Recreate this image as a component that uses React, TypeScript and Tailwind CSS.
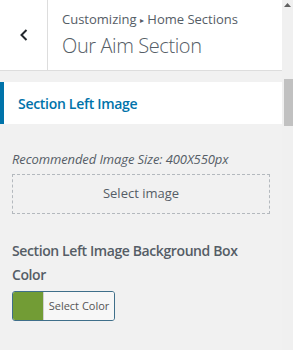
export default function App() {
  return (
    <div className="w-[293px] h-[350px] flex bg-[#f1f1f1] overflow-hidden font-['Segoe_UI','Open_Sans',sans-serif] text-[#555d66]">
      <div className="flex-1 flex flex-col">
        <div className="h-[71px] bg-white border-b border-[#dddddd] flex">
          <button className="w-[48px] border-r border-[#dddddd] flex items-center justify-center">
            <svg width="10" height="14" viewBox="0 0 10 14">
              <path d="M7.5 2 L2.5 7 L7.5 12" stroke="#23282d" strokeWidth="2" fill="none" />
            </svg>
          </button>
          <div className="flex flex-col pl-[14px] pt-[10px]">
            <div className="text-[13px] leading-[18px] text-[#555d66]">
              Customizing <span className="text-[8px] align-[1px]">▸</span> Home Sections
            </div>
            <div className="text-[20px] leading-[28px] font-light tracking-[-0.4px] text-[#555d66] mt-[3px]">Our Aim Section</div>
          </div>
        </div>
        <div className="mt-[11px] h-[42px] bg-white border-l-4 border-[#0073aa] flex items-center pl-[14px]">
          <span className="text-[14px] font-semibold tracking-[-0.3px] text-[#0073aa]">Section Left Image</span>
        </div>
        <div className="px-[12px] pt-[26px]">
          <div className="text-[13px] italic leading-[18px] tracking-[-0.1px]">Recommended Image Size: 400X550px</div>
          <div className="mt-[6px] w-[258px] h-[40px] border border-dashed border-[#b4b9be] flex items-center justify-center text-[13px] text-[#555d66]">
            Select image
          </div>
          <div className="mt-[25px] text-[14px] font-semibold leading-[24px] tracking-[-0.4px]">
            Section Left Image Background Box Color
          </div>
          <div className="mt-[4px] w-[103px] h-[30px] border border-[#3f6f8a] rounded-[3px] flex overflow-hidden">
            <div className="w-[30px] bg-[#729c35]" />
            <div className="flex-1 bg-[#f7f7f7] border-l border-[#d0d0d0] flex items-center justify-center text-[11px] text-[#555]">
              Select Color
            </div>
          </div>
        </div>
      </div>
      <div className="w-[11px] bg-[#f0f0f0] flex flex-col items-end">
        <div className="h-[10px] w-full flex items-center justify-center">
          <svg width="7" height="4" viewBox="0 0 7 4"><path d="M0 4 L3.5 0 L7 4 Z" fill="#606060" /></svg>
        </div>
        <div className="mt-[69px] h-[47px] w-[9px] bg-[#c1c1c1]" />
      </div>
    </div>
  );
}
